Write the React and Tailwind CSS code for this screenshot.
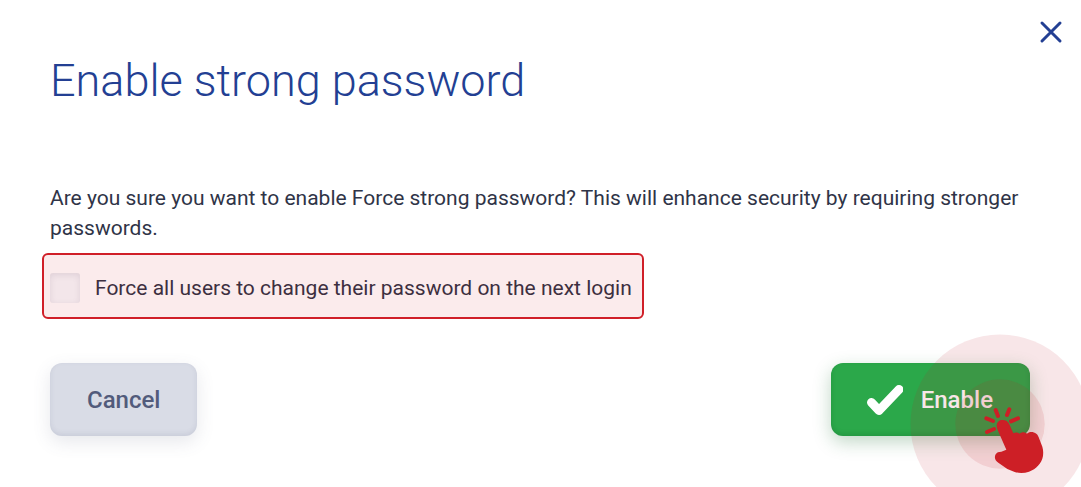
import { useState } from "react";

function CloseIcon() {
  return (
    <svg viewBox="0 0 24 24" className="size-6" fill="none" stroke="currentColor" strokeWidth="3" strokeLinecap="round" aria-hidden="true">
      <path d="M3 3 21 21M21 3 3 21" />
    </svg>
  );
}

function CheckIcon() {
  return (
    <svg viewBox="0 0 36 31" className="h-[31px] w-9" fill="none" stroke="currentColor" strokeLinecap="round" strokeLinejoin="round" aria-hidden="true">
      <path d="M4.500 18.500 12 26.500 32 5.500" strokeWidth="9" />
    </svg>
  );
}

function ClickMarker() {
  return (
    <svg
      viewBox="0 0 180 180"
      className="pointer-events-none absolute -right-15 -bottom-[78px] size-[180px] max-w-none"
      aria-hidden="true"
    >
      <circle cx="90" cy="90" r="89.5" fill="#c01f30" fillOpacity="0.11" />
      <circle cx="90" cy="90" r="44.700" fill="#cc1f26" fillOpacity="0.11" />
      <g transform="translate(60 61) scale(0.33333)" fill="#cd1f26">
        <path d="M82 103C76 84 85 75 98 75C108 75 114 79 118 88L130 115C136 111 143 112 149 116C155 110 164 110 171 116C177 109 190 109 199 116C204 120 206 126 208 132L217 155C220 164 220 174 219 183C215 205 199 222 177 230C163 235 147 235 134 231L112 222L85 203C75 197 72 187 77 178C80 172 86 170 94 170L109 164Z" />
        <g stroke="#cd1f26" strokeWidth="12" strokeLinecap="round">
          <path d="M77 45 84 63M118 43 111 60M49 70 69 78M144 70 123 79M51 111 72 102" />
        </g>
      </g>
    </svg>
  );
}

export default function App() {
  const [force, setForce] = useState(false);

  return (
    <main
      role="dialog"
      aria-labelledby="dialog-title"
      className="relative min-h-screen overflow-hidden bg-white pr-[51px] pl-[50px] pt-[51px] pb-[50px] font-[Roboto,sans-serif] text-[21px] leading-[30px] text-[#2f3447]"
    >
      <button type="button" aria-label="Close" className="absolute top-5 right-[18px] text-[#233f93]">
        <CloseIcon />
      </button>

      <h1 id="dialog-title" className="text-[45px] leading-[60px] font-light text-[#233f93]">
        Enable strong password
      </h1>

      <p className="mt-[72px]">
        Are you sure you want to enable Force strong password? This will enhance security by requiring stronger
        passwords.
      </p>

      <label className="mt-[10px] -ml-2 flex w-fit items-center gap-[15px] rounded-md border-2 border-[#d01f28] bg-[#fbebec] pt-[18px] pb-[14px] pr-[10px] pl-[6px] text-[#3d2f40]">
        <input
          type="checkbox"
          checked={force}
          onChange={(e) => setForce(e.target.checked)}
          className="size-[30px] appearance-none rounded-[3px] bg-[#f3e6ea] shadow-[inset_0_2px_6px_rgba(90,60,90,0.13)] checked:bg-[#233f93]"
        />
        Force all users to change their password on the next login
      </label>

      <div className="mt-[44px] flex items-start justify-between text-[24px] font-medium">
        <button
          type="button"
          className="h-[73px] rounded-xl bg-[#d9dce6] px-[37px] text-[#525b7b] shadow-[0_6px_18px_rgba(82,91,123,0.14),inset_0_-2px_5px_rgba(82,91,123,0.12)]"
        >
          Cancel
        </button>
        <div className="relative">
          <button
            type="button"
            className="flex h-[73px] items-center gap-[18px] rounded-xl bg-[#2ba84a] pr-[37px] pl-9 text-white shadow-[0_6px_18px_rgba(30,110,50,0.28),inset_0_-2px_5px_rgba(10,80,30,0.2)]"
          >
            <CheckIcon />
            Enable
          </button>
          <ClickMarker />
        </div>
      </div>
    </main>
  );
}
